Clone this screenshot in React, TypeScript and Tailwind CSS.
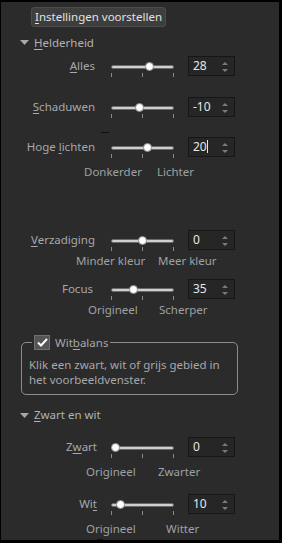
import React from "react";

const F = "font-['Noto_Sans',sans-serif]";

function U({ children }: { children: React.ReactNode }) {
  return <span className="underline underline-offset-[2px] decoration-[1px]">{children}</span>;
}

function Slider({ frac }: { frac: number }) {
  const cx = 4 + frac * 54;
  return (
    <div className="relative w-[64px] h-[20px]">
      <div className="absolute left-0 top-[9px] w-[63px] h-[4px] rounded-full bg-[#cfcfcf] border border-[#6a6a6a]" />
      <div
        className="absolute top-[6px] w-[9px] h-[9px] rounded-full bg-white border border-[#888]"
        style={{ left: cx - 4.5 }}
      />
      <div className="absolute left-0 top-[17px] w-[1px] h-[4px] bg-[#8a8a8a]" />
      <div className="absolute left-[31px] top-[17px] w-[1px] h-[4px] bg-[#8a8a8a]" />
      <div className="absolute left-[62px] top-[17px] w-[1px] h-[4px] bg-[#8a8a8a]" />
    </div>
  );
}

function Spin({ value, cursor }: { value: string; cursor?: boolean }) {
  return (
    <div className="relative w-[47px] h-[20px] bg-[#262626] border border-[#161616] flex items-center">
      <span className="pl-[4px] text-[12px] leading-none text-[#e6e6e6]">{value}</span>
      {cursor && <span className="w-[1px] h-[13px] bg-[#e6e6e6]" />}
      <svg className="absolute right-[5px] top-[4px]" width="8" height="12" viewBox="0 0 8 12">
        <path d="M1 4 L4 1 L7 4 Z" fill="#7a7a7a" />
        <path d="M1 8 L4 11 L7 8 Z" fill="#7a7a7a" />
      </svg>
    </div>
  );
}

function Row({ label, value, frac, cursor, labelW = 94 }: { label: React.ReactNode; value: string; frac: number; cursor?: boolean; labelW?: number }) {
  return (
    <div className="flex items-center h-[20px]">
      <div className="text-right text-[11.5px] text-[#a6a8ab] leading-none" style={{ width: labelW }}>
        {label}
      </div>
      <div style={{ marginLeft: 110 - labelW }}>
        <Slider frac={frac} />
      </div>
      <div className="ml-[13px]">
        <Spin value={value} cursor={cursor} />
      </div>
    </div>
  );
}

function Sub({ a, ax, b, bx }: { a: string; ax: number; b: string; bx: number }) {
  return (
    <div className="relative h-[16px] text-[11.5px] leading-[16px] text-[#9fa1a4]">
      <span className="absolute top-0" style={{ left: ax - 1 }}>{a}</span>
      <span className="absolute top-0" style={{ left: bx - 1 }}>{b}</span>
    </div>
  );
}

function Header({ children }: { children: React.ReactNode }) {
  return (
    <div className="flex items-center h-[16px] pl-[19px]">
      <svg width="9" height="5" viewBox="0 0 9 5">
        <path d="M0 0 L9 0 L4.5 5 Z" fill="#a8a8a8" />
      </svg>
      <span className="ml-[5px] text-[11.5px] leading-none text-[#b0b2b5]">{children}</span>
    </div>
  );
}

export default function App() {
  return (
    <div className={`w-[282px] h-[543px] bg-black pl-[1px] pt-[2px] pr-[3px] pb-[3px] ${F}`}>
      <div className="relative w-full h-full bg-[#2b2b2b] flex flex-col">
        <div className="mt-[5px] ml-[30px] w-[135px] h-[20px] rounded-[3px] bg-[#3e3e3e] border border-[#4c4c4c] flex items-center justify-center text-[11.5px] leading-none text-[#e2e2e2]">
          <span><U>I</U>nstellingen voorstellen</span>
        </div>
        <div className="mt-[8px]">
          <Header><U>H</U>elderheid</Header>
        </div>
        <div className="mt-[5px]">
          <Row label={<><U>A</U>lles</>} value="28" frac={0.64} />
        </div>
        <div className="mt-[21px]">
          <Row label={<><U>S</U>chaduwen</>} value="-10" frac={0.45} />
        </div>
        <div className="mt-[15px] ml-[100px] w-[8px] h-[1px] bg-[#111]" />
        <div className="mt-[4px]">
          <Row label={<>Hoge <U>l</U>ichten</>} value="20" frac={0.6} cursor />
        </div>
        <div className="mt-[7px]">
          <Sub a="Donkerder" ax={84} b="Lichter" bx={157} />
        </div>
        <div className="mt-[50px]">
          <Row label={<><U>V</U>erzadiging</>} value="0" frac={0.5} />
        </div>
        <div className="mt-[3px]">
          <Sub a="Minder kleur" ax={76} b="Meer kleur" bx={158} />
        </div>
        <div className="mt-[10px]">
          <Row label="Focus" value="35" frac={0.35} labelW={92} />
        </div>
        <div className="mt-[3px]">
          <Sub a="Origineel" ax={88} b="Scherper" bx={159} />
        </div>
        <fieldset className="mt-[17px] ml-[20px] w-[217px] h-[61px] border border-[#8c8c8c] rounded-[5px] px-[7px] pt-[6px]">
          <legend className="ml-[3px] px-[2px]">
            <div className="flex items-center h-[16px]">
              <div className="w-[16px] h-[15px] bg-[#555] border border-[#6f6f6f] flex items-center justify-center">
                <svg width="11" height="9" viewBox="0 0 11 9">
                  <path d="M1 4.5 L4 7.5 L10 1" stroke="#fff" strokeWidth="2" fill="none" />
                </svg>
              </div>
              <span className="ml-[5px] text-[11.5px] leading-none text-[#a6a8ab]">Wit<U>b</U>alans</span>
            </div>
          </legend>
          <p className="text-[11.5px] leading-[15px] text-[#a6a8ab]">
            Klik een zwart, wit of grijs gebied in het voorbeeldvenster.
          </p>
        </fieldset>
        <div className="mt-[12px]">
          <Header><U>Z</U>wart en wit</Header>
        </div>
        <div className="mt-[14px]">
          <Row label={<>Z<U>w</U>art</>} value="0" frac={0} labelW={96} />
        </div>
        <div className="mt-[7px]">
          <Sub a="Origineel" ax={86} b="Zwarter" bx={158} />
        </div>
        <div className="mt-[14px]">
          <Row label={<>Wi<U>t</U></>} value="10" frac={0.1} labelW={96} />
        </div>
        <div className="mt-[7px]">
          <Sub a="Origineel" ax={86} b="Witter" bx={166} />
        </div>
        <div className="mt-[2px] ml-[96px] w-[6px] h-[1px] bg-[#111]" />
      </div>
    </div>
  );
}
